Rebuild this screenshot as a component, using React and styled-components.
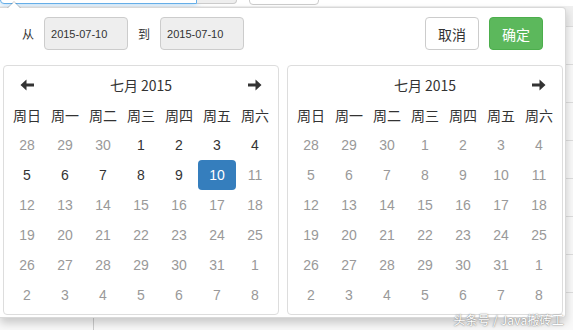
import React from 'react'
import styled, { createGlobalStyle } from 'styled-components'

const GlobalStyle = createGlobalStyle`
    html, body {
        margin: 0;
        padding: 0;
        background: #fff;
        overflow: hidden;
    }
    body {
        font-family: "Liberation Sans", "Noto Sans CJK SC", sans-serif;
        color: #333;
    }
`

const CJK = `"Noto Sans CJK SC", "Liberation Sans", sans-serif`

const Page = styled.div`
    position: relative;
    width: 573px;
    height: 330px;
    overflow: hidden;
    background: #efefef;
`

const TopBar = styled.div`
    display: flex;
    align-items: flex-start;
    margin-top: -28px;
    height: 34px;
    background: #fff;
`

const FocusInput = styled.div`
    width: 197px;
    height: 32px;
    box-sizing: border-box;
    background: #fff;
    border: 1px solid #66afe9;
    border-radius: 4px 0 0 4px;
    box-shadow: 0 0 6px rgba(102, 175, 233, 0.6);
`

const Addon = styled.div`
    width: 40px;
    height: 32px;
    box-sizing: border-box;
    background: #eee;
    border: 1px solid #ccc;
    border-left: none;
    border-radius: 0 4px 4px 0;
`

const GhostButton = styled.div`
    margin-left: 12px;
    width: 70px;
    height: 33px;
    box-sizing: border-box;
    background: #fff;
    border: 1px solid #ccc;
    border-radius: 4px;
`

const BgTable = styled.div`
    display: flex;
    flex-direction: column;
    margin-top: 20px;
`

const BgRow = styled.div`
    display: grid;
    grid-template-columns: 93px 1fr;
    height: 37px;
    border-top: 1px solid #ddd;
    background: #f9f9f9;
`

const BgCell = styled.div`
    border-left: ${(p) => (p.$first ? 'none' : '1px solid #ccc')};
`

const Popup = styled.div`
    position: absolute;
    left: 0;
    top: 7px;
    width: 566px;
    height: 311px;
    box-sizing: border-box;
    background: #fff;
    border: 1px solid rgba(0, 0, 0, 0.15);
    border-left: none;
    border-radius: 0 4px 4px 0;
    box-shadow: 0 5px 10px rgba(0, 0, 0, 0.2);
    padding: 9px 22px 0 3px;

    &::before {
        content: '';
        position: absolute;
        left: 7px;
        top: -7px;
        border-left: 7px solid transparent;
        border-right: 7px solid transparent;
        border-bottom: 7px solid rgba(0, 0, 0, 0.2);
    }
    &::after {
        content: '';
        position: absolute;
        left: 8px;
        top: -6px;
        border-left: 6px solid transparent;
        border-right: 6px solid transparent;
        border-bottom: 6px solid #fff;
    }
`

const RangeBar = styled.div`
    display: flex;
    align-items: center;
    height: 33px;
    padding-left: 19px;
`

const RangeLabel = styled.span`
    font-family: ${CJK};
    font-size: 12px;
    color: #333;
    margin-right: 10px;
    margin-left: ${(p) => (p.$gap ? '10px' : '0')};
`

const DateInput = styled.div`
    width: 84px;
    height: 33px;
    box-sizing: border-box;
    display: flex;
    align-items: center;
    padding-left: 6px;
    background: #eee;
    border: 1px solid #ccc;
    border-radius: 4px;
    font-size: 11px;
    color: #333;
`

const Spacer = styled.div`
    flex: 1;
`

const Button = styled.button`
    width: 54px;
    height: 33px;
    margin-left: ${(p) => (p.$ml || 0)}px;
    padding: 0;
    font-family: ${CJK};
    font-size: 14px;
    border-radius: 4px;
    border: 1px solid ${(p) => (p.$primary ? '#4cae4c' : '#ccc')};
    background: ${(p) => (p.$primary ? '#5cb85c' : '#fff')};
    color: ${(p) => (p.$primary ? '#fff' : '#333')};
`

const Calendars = styled.div`
    display: flex;
    gap: 8px;
    margin-top: 15px;
`

const CalendarBox = styled.div`
    width: 276px;
    box-sizing: border-box;
    border: 1px solid #ddd;
    border-radius: 4px;
    padding: 4px;
`

const Grid = styled.div`
    display: grid;
    grid-template-columns: repeat(7, 38px);
    grid-auto-rows: 30px;
`

const Cell = styled.div`
    display: flex;
    align-items: center;
    justify-content: center;
    font-size: 14px;
    border-radius: 4px;
    color: ${(p) => (p.$active ? '#fff' : p.$muted ? '#999' : '#333')};
    background: ${(p) => (p.$active ? '#357ebd' : 'transparent')};
`

const DayName = styled(Cell)`
    font-family: ${CJK};
`

const MonthTitle = styled(Cell)`
    grid-column: span 5;
    font-family: ${CJK};
`

const Watermark = styled.div`
    position: absolute;
    right: 9px;
    bottom: 2px;
    font-family: ${CJK};
    font-size: 12px;
    color: #fff;
    text-shadow: 0 0 1px #777, 0 0 2px #999;
    letter-spacing: 0.2px;
`

const Arrow = ({ left }) => (
    <svg width="14" height="12" viewBox="0 0 14 12" style={{ transform: left ? 'scaleX(-1)' : 'none' }}>
        <path d="M0 4.5 H7.5 V0.5 L13.5 6 L7.5 11.5 V7.5 H0 Z" fill="#333" />
    </svg>
)

const weekDays = ['周日', '周一', '周二', '周三', '周四', '周五', '周六']

const buildDays = () => {
    const days = []
    ;[28, 29, 30].forEach((d) => days.push({ d, off: true }))
    for (let d = 1; d <= 31; d++) days.push({ d, off: false })
    for (let d = 1; d <= 8; d++) days.push({ d, off: true })
    return days
}

const Calendar = ({ prev, next, enabledUntil, selected }) => (
    <CalendarBox>
        <Grid>
            <Cell>{prev && <Arrow left />}</Cell>
            <MonthTitle>七月 2015</MonthTitle>
            <Cell>{next && <Arrow />}</Cell>
            {weekDays.map((w) => (
                <DayName key={w}>{w}</DayName>
            ))}
            {buildDays().map((day, i) => (
                <Cell
                    key={i}
                    $active={!day.off && day.d === selected}
                    $muted={day.off || day.d > enabledUntil}
                >
                    {day.d}
                </Cell>
            ))}
        </Grid>
    </CalendarBox>
)

export default function App() {
    return (
        <Page>
            <GlobalStyle />
            <TopBar>
                <FocusInput />
                <Addon />
                <GhostButton />
            </TopBar>
            <BgTable>
                {Array.from({ length: 9 }).map((_, i) => (
                    <BgRow key={i}>
                        <BgCell $first />
                        <BgCell />
                    </BgRow>
                ))}
            </BgTable>
            <Popup>
                <RangeBar>
                    <RangeLabel>从</RangeLabel>
                    <DateInput>2015-07-10</DateInput>
                    <RangeLabel $gap>到</RangeLabel>
                    <DateInput>2015-07-10</DateInput>
                    <Spacer />
                    <Button>取消</Button>
                    <Button $primary $ml={10}>确定</Button>
                </RangeBar>
                <Calendars>
                    <Calendar prev next enabledUntil={10} selected={10} />
                    <Calendar next enabledUntil={0} />
                </Calendars>
            </Popup>
            <Watermark>头条号 / Java搬砖工</Watermark>
        </Page>
    )
}
